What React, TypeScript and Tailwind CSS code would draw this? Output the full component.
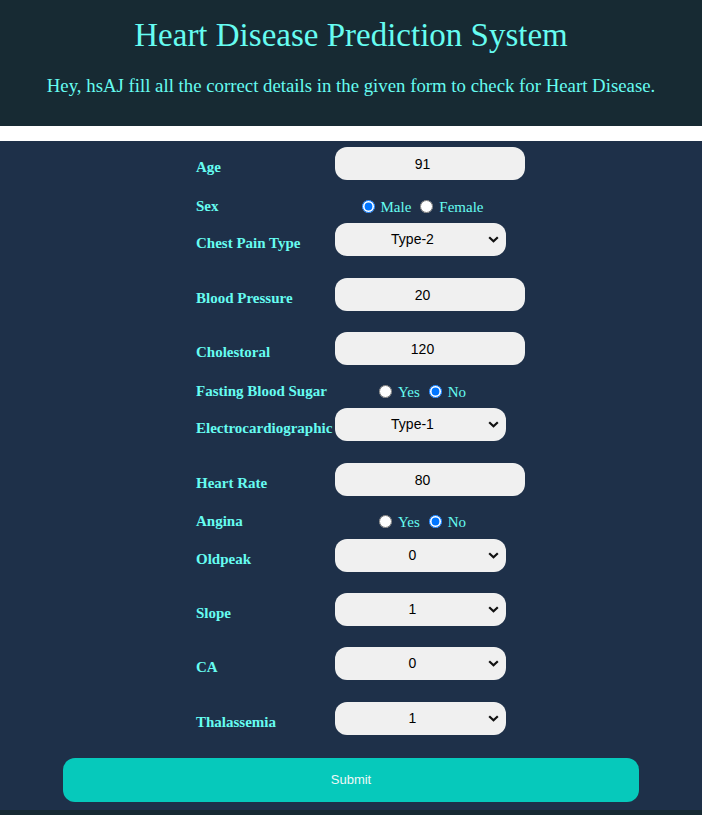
import React from 'react';

const serif = { fontFamily: '"Liberation Serif", "Times New Roman", serif' };

type Row =
  | { kind: 'input'; label: string; value: string; mt: string }
  | { kind: 'select'; label: string; value: string; options: string[]; mt: string }
  | { kind: 'radio'; label: string; name: string; choices: string[]; checked: string; mt: string };

const rows: Row[] = [
  { kind: 'input', label: 'Age', value: '91', mt: 'mt-0' },
  { kind: 'radio', label: 'Sex', name: 'sex', choices: ['Male', 'Female'], checked: 'Male', mt: 'mt-[16px]' },
  { kind: 'select', label: 'Chest Pain Type', value: 'Type-2', options: ['Type-1', 'Type-2', 'Type-3', 'Type-4'], mt: 'mt-[7px]' },
  { kind: 'input', label: 'Blood Pressure', value: '20', mt: 'mt-[22px]' },
  { kind: 'input', label: 'Cholestoral', value: '120', mt: 'mt-[21px]' },
  { kind: 'radio', label: 'Fasting Blood Sugar', name: 'fbs', choices: ['Yes', 'No'], checked: 'No', mt: 'mt-[16px]' },
  { kind: 'select', label: 'Electrocardiographic', value: 'Type-1', options: ['Type-1', 'Type-2', 'Type-3'], mt: 'mt-[7px]' },
  { kind: 'input', label: 'Heart Rate', value: '80', mt: 'mt-[22px]' },
  { kind: 'radio', label: 'Angina', name: 'angina', choices: ['Yes', 'No'], checked: 'No', mt: 'mt-[15px]' },
  { kind: 'select', label: 'Oldpeak', value: '0', options: ['0', '1', '2', '3', '4', '5', '6'], mt: 'mt-[8px]' },
  { kind: 'select', label: 'Slope', value: '1', options: ['0', '1', '2'], mt: 'mt-[21px]' },
  { kind: 'select', label: 'CA', value: '0', options: ['0', '1', '2', '3'], mt: 'mt-[21px]' },
  { kind: 'select', label: 'Thalassemia', value: '1', options: ['0', '1', '2', '3'], mt: 'mt-[22px]' },
];

const FieldLabel: React.FC<{ text: string; radio?: boolean }> = ({ text, radio }) => (
  <label
    style={serif}
    className={`w-[139px] shrink-0 whitespace-nowrap text-[15px] font-bold leading-[19px] text-[#66fcf1] ${radio ? '' : 'mt-[11px]'}`}
  >
    {text}
  </label>
);

const App: React.FC = () => {
  return (
    <div className="min-h-[815px] bg-[#172a33]">
      <header className="h-[126px] bg-[#172a33] pt-[16px] text-center text-[#66fcf1]" style={serif}>
        <h1 className="text-[33px] leading-[38px]">Heart Disease Prediction System</h1>
        <p className="mt-[21px] text-[18.8px] leading-[22px]">
          Hey, hsAJ fill all the correct details in the given form to check for Heart Disease.
        </p>
      </header>
      <div className="h-[15px] bg-white" />

      <form className="bg-[#1e3049] pt-[6px] pb-[8px]" onSubmit={(e) => e.preventDefault()}>
        <div className="pl-[196px]">
          {rows.map((row) => {
            if (row.kind === 'radio') {
              return (
                <div key={row.label} className={`flex h-[20px] items-center ${row.mt}`}>
                  <FieldLabel text={row.label} radio />
                  <div
                    style={serif}
                    className="flex w-[175px] items-center justify-center text-[15px] text-[#66fcf1]"
                  >
                    {row.choices.map((c, i) => (
                      <span key={c} className={`flex items-center ${i > 0 ? 'ml-[9px]' : ''}`}>
                        <input
                          type="radio"
                          name={row.name}
                          defaultChecked={c === row.checked}
                          className="m-0 h-[13px] w-[13px]"
                        />
                        <span className="ml-[6px] leading-[19px] pt-[2px]">{c}</span>
                      </span>
                    ))}
                  </div>
                </div>
              );
            }
            return (
              <div key={row.label} className={`flex h-[33px] items-start ${row.mt}`}>
                <FieldLabel text={row.label} />
                {row.kind === 'input' ? (
                  <input
                    type="text"
                    defaultValue={row.value}
                    className="h-[33px] w-[190px] rounded-[12px] bg-[#f0f0f0] pr-[15px] text-center font-['Liberation_Sans',Arial,sans-serif] text-[14px] text-black outline-none"
                  />
                ) : (
                  <div className="relative h-[33px] w-[171px]">
                    <select
                      defaultValue={row.value}
                      className="h-[33px] w-full appearance-none rounded-[12px] bg-[#f0f0f0] pr-[16px] text-center font-['Liberation_Sans',Arial,sans-serif] text-[14px] text-black outline-none"
                    >
                      {row.options.map((o) => (
                        <option key={o} value={o}>
                          {o}
                        </option>
                      ))}
                    </select>
                    <svg
                      className="pointer-events-none absolute right-[7px] top-[13px]"
                      width="11"
                      height="7"
                      viewBox="0 0 11 7"
                    >
                      <path d="M1.2 1.2 L5.5 5.3 L9.8 1.2" fill="none" stroke="#111" strokeWidth="2.2" />
                    </svg>
                  </div>
                )}
              </div>
            );
          })}
        </div>

        <button
          type="submit"
          className="mx-[63px] mt-[23px] block h-[44px] w-[576px] rounded-[12px] bg-[#06c9bb] font-['Liberation_Sans',Arial,sans-serif] text-[13px] text-[#eef8f7]"
        >
          Submit
        </button>
      </form>
    </div>
  );
};

export default App;
